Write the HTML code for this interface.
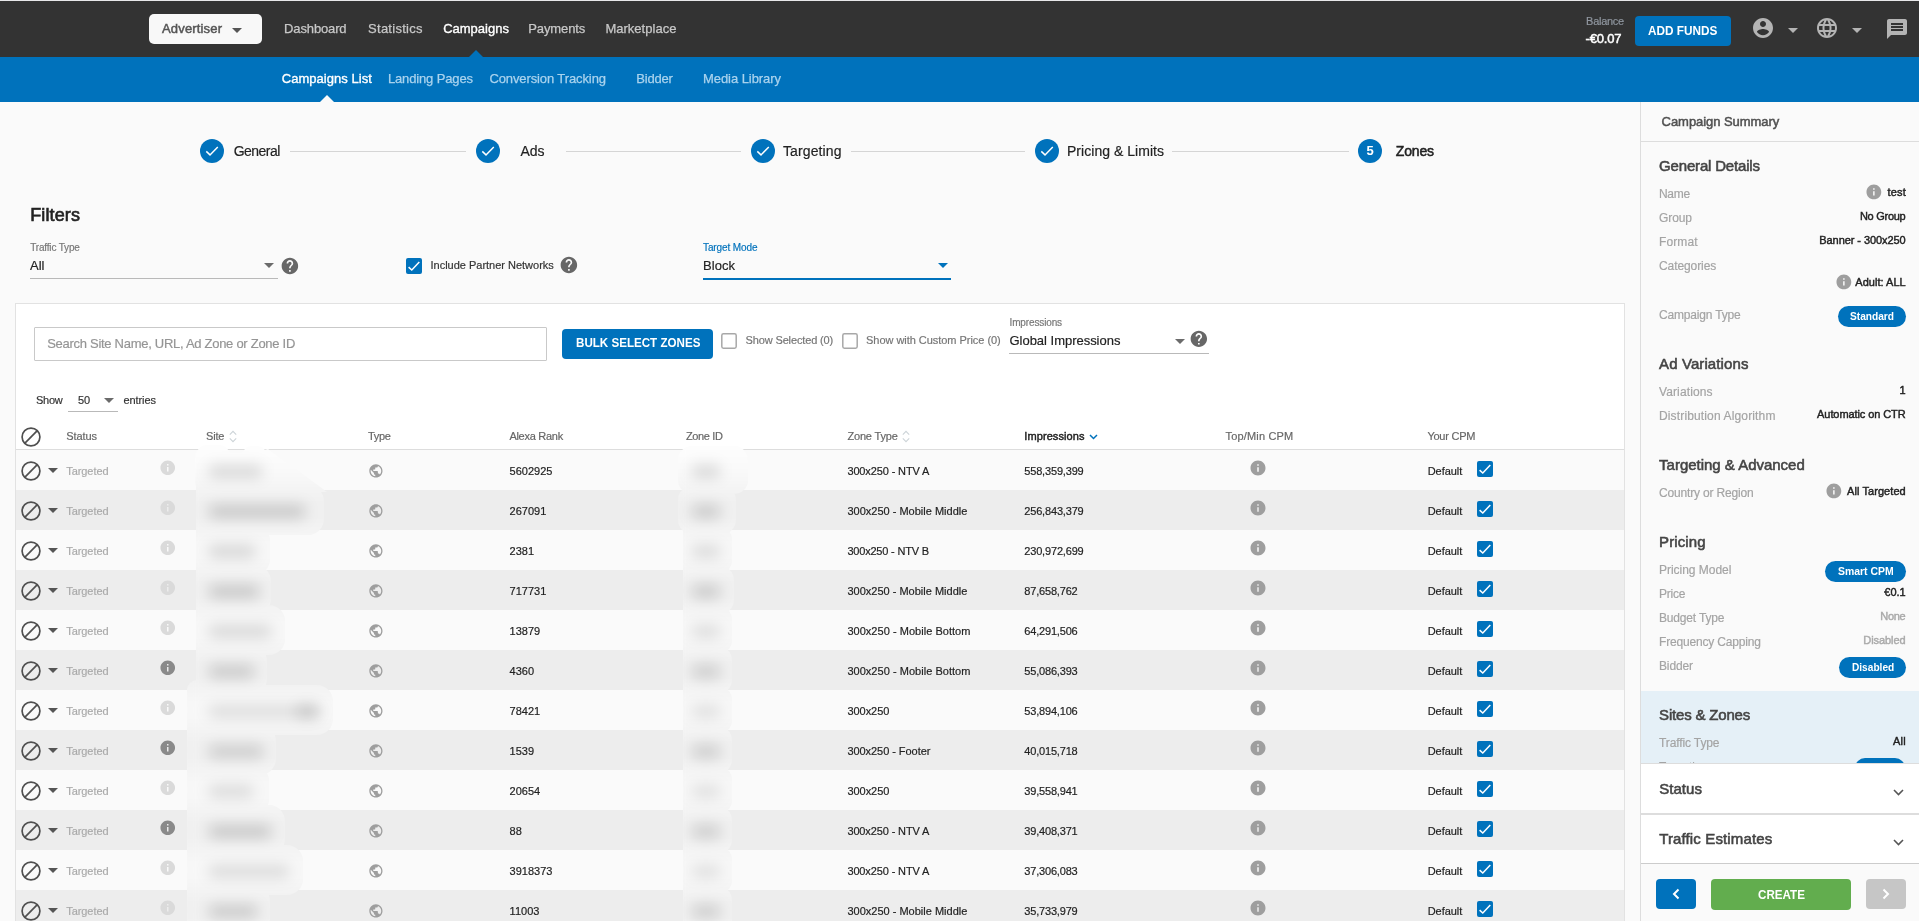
<!DOCTYPE html>
<html><head><meta charset="utf-8"><title>Campaigns</title>
<style>
html,body{margin:0;padding:0}
body{width:1919px;height:921px;overflow:hidden;position:relative;background:#fafafa;font-family:'Liberation Sans',sans-serif}
#r{position:absolute;left:0;top:0;width:1919px;height:921px;overflow:hidden;will-change:transform}
#r div,#r svg,#r span{position:absolute;display:block;box-sizing:border-box}
#r span{white-space:pre}
</style></head><body><div id="r" style="position:absolute">
<div style="left:0px;top:0px;width:1919px;height:57px;background:#333;"></div>
<div style="left:0px;top:0px;width:1919px;height:1px;background:#e8e8ea;"></div>
<div style="left:0px;top:57px;width:1919px;height:45px;background:#0072bc;"></div>
<div style="left:149px;top:14px;width:113px;height:30px;background:#f8f8f8;border-radius:5px;"></div>
<svg style="left:232.0px;top:28.0px;" width="10" height="5" viewBox="0 0 10 5"><path fill="#555" d="M0 0h10l-5.0 5z"/></svg>
<svg style="left:469px;top:50px;" width="14" height="7" viewBox="0 0 14 7"><path fill="#0072bc" d="M0 7L7 0l7 7z"/></svg>
<svg style="left:320px;top:95px;" width="14" height="7" viewBox="0 0 14 7"><path fill="#fafafa" d="M0 7L7 0l7 7z"/></svg>
<div style="left:1635px;top:16px;width:96px;height:30px;background:#0072bc;border-radius:4px;"></div>
<svg style="left:1751.0px;top:16.0px;" width="24.0" height="24.0" viewBox="0 0 24 24"><path fill="#b4b4b4" d="M12 2C6.48 2 2 6.48 2 12s4.48 10 10 10 10-4.48 10-10S17.52 2 12 2zm0 3c1.66 0 3 1.34 3 3s-1.34 3-3 3-3-1.34-3-3 1.34-3 3-3zm0 14.2c-2.5 0-4.71-1.28-6-3.22.03-1.99 4-3.08 6-3.08 1.99 0 5.97 1.09 6 3.08-1.29 1.94-3.5 3.22-6 3.22z"/></svg>
<svg style="left:1787.7px;top:27.5px;" width="10" height="5" viewBox="0 0 10 5"><path fill="#b4b4b4" d="M0 0h10l-5.0 5z"/></svg>
<svg style="left:1815.0px;top:16.0px;" width="24.0" height="24.0" viewBox="0 0 24 24"><path fill="#b4b4b4" d="M11.99 2C6.47 2 2 6.48 2 12s4.47 10 9.99 10C17.52 22 22 17.52 22 12S17.52 2 11.99 2zm6.93 6h-2.95c-.32-1.25-.78-2.45-1.38-3.56 1.84.63 3.37 1.91 4.33 3.56zM12 4.04c.83 1.2 1.48 2.53 1.91 3.96h-3.82c.43-1.43 1.08-2.76 1.91-3.96zM4.26 14C4.1 13.36 4 12.69 4 12s.1-1.36.26-2h3.38c-.08.66-.14 1.32-.14 2 0 .68.06 1.34.14 2H4.26zm.82 2h2.95c.32 1.25.78 2.45 1.38 3.56-1.84-.63-3.37-1.9-4.33-3.56zm2.95-8H5.08c.96-1.66 2.49-2.93 4.33-3.56C8.81 5.55 8.35 6.75 8.03 8zM12 19.96c-.83-1.2-1.48-2.53-1.91-3.96h3.82c-.43 1.43-1.08 2.76-1.91 3.96zM14.34 14H9.66c-.09-.66-.16-1.32-.16-2 0-.68.07-1.35.16-2h4.68c.09.65.16 1.32.16 2 0 .68-.07 1.34-.16 2zm.25 5.56c.6-1.11 1.06-2.31 1.38-3.56h2.95c-.96 1.65-2.49 2.93-4.33 3.56zM16.36 14c.08-.66.14-1.32.14-2 0-.68-.06-1.34-.14-2h3.38c.16.64.26 1.31.26 2s-.1 1.36-.26 2h-3.38z"/></svg>
<svg style="left:1852.0px;top:27.5px;" width="10" height="5" viewBox="0 0 10 5"><path fill="#b4b4b4" d="M0 0h10l-5.0 5z"/></svg>
<svg style="left:1885.0px;top:17.0px;" width="24.0" height="24.0" viewBox="0 0 24 24"><path fill="#b4b4b4" d="M20 2H4c-1.1 0-1.99.9-1.99 2L2 22l4-4h14c1.1 0 2-.9 2-2V4c0-1.1-.9-2-2-2zm-2 12H6v-2h12v2zm0-3H6V9h12v2zm0-3H6V6h12v2z"/></svg>
<div style="left:200px;top:139px;width:24px;height:24px;background:#0072bc;border-radius:50%;"></div>
<svg style="left:200px;top:139px;" width="24" height="24" viewBox="0 0 24 24"><path fill="none" stroke="#fff" stroke-width="1.45" d="M6.3 12.4L10 15.9L17.8 7.9"/></svg>
<div style="left:476px;top:139px;width:24px;height:24px;background:#0072bc;border-radius:50%;"></div>
<svg style="left:476px;top:139px;" width="24" height="24" viewBox="0 0 24 24"><path fill="none" stroke="#fff" stroke-width="1.45" d="M6.3 12.4L10 15.9L17.8 7.9"/></svg>
<div style="left:751px;top:139px;width:24px;height:24px;background:#0072bc;border-radius:50%;"></div>
<svg style="left:751px;top:139px;" width="24" height="24" viewBox="0 0 24 24"><path fill="none" stroke="#fff" stroke-width="1.45" d="M6.3 12.4L10 15.9L17.8 7.9"/></svg>
<div style="left:1035px;top:139px;width:24px;height:24px;background:#0072bc;border-radius:50%;"></div>
<svg style="left:1035px;top:139px;" width="24" height="24" viewBox="0 0 24 24"><path fill="none" stroke="#fff" stroke-width="1.45" d="M6.3 12.4L10 15.9L17.8 7.9"/></svg>
<div style="left:1358px;top:139px;width:24px;height:24px;background:#0072bc;border-radius:50%;"></div>
<div style="left:290px;top:151px;width:176px;height:1px;background:#d5d5d5;"></div>
<div style="left:566px;top:151px;width:175px;height:1px;background:#d5d5d5;"></div>
<div style="left:851px;top:151px;width:174px;height:1px;background:#d5d5d5;"></div>
<div style="left:1172px;top:151px;width:177px;height:1px;background:#d5d5d5;"></div>
<div style="left:30px;top:278px;width:248px;height:1px;background:#b9b9b9;"></div>
<svg style="left:264.0px;top:262.8px;" width="10" height="5" viewBox="0 0 10 5"><path fill="#6b6b6b" d="M0 0h10l-5.0 5z"/></svg>
<svg style="left:280.25px;top:256.1px;" width="19.8" height="19.8" viewBox="0 0 24 24"><path fill="#676767" d="M12 2C6.48 2 2 6.48 2 12s4.48 10 10 10 10-4.48 10-10S17.52 2 12 2zm1 17h-2v-2h2v2zm2.07-7.75l-.9.92C13.45 12.9 13 13.5 13 15h-2v-.5c0-1.1.45-2.1 1.17-2.83l1.24-1.26c.37-.36.59-.86.59-1.41 0-1.1-.9-2-2-2s-2 .9-2 2H8c0-2.21 1.79-4 4-4s4 1.79 4 4c0 .88-.36 1.68-.93 2.25z"/></svg>
<div style="left:406px;top:258px;width:16px;height:16px;background:#0072bc;border-radius:2px;"></div>
<svg style="left:406px;top:258px;" width="16" height="16" viewBox="0 0 16 16"><path fill="none" stroke="#fff" stroke-width="1.5" d="M2.6 9.1L5.8 12L13.3 4"/></svg>
<svg style="left:559.1px;top:255.1px;" width="19.8" height="19.8" viewBox="0 0 24 24"><path fill="#676767" d="M12 2C6.48 2 2 6.48 2 12s4.48 10 10 10 10-4.48 10-10S17.52 2 12 2zm1 17h-2v-2h2v2zm2.07-7.75l-.9.92C13.45 12.9 13 13.5 13 15h-2v-.5c0-1.1.45-2.1 1.17-2.83l1.24-1.26c.37-.36.59-.86.59-1.41 0-1.1-.9-2-2-2s-2 .9-2 2H8c0-2.21 1.79-4 4-4s4 1.79 4 4c0 .88-.36 1.68-.93 2.25z"/></svg>
<div style="left:703px;top:278px;width:248px;height:2px;background:#0072bc;"></div>
<svg style="left:938.0px;top:263.1px;" width="10" height="5" viewBox="0 0 10 5"><path fill="#0072bc" d="M0 0h10l-5.0 5z"/></svg>
<div style="left:15px;top:303px;width:1610px;height:640px;background:#fff;border:1px solid #e2e2e2;"></div>
<div style="left:34px;top:327px;width:513px;height:34px;background:#fff;border:1px solid #c9c9c9;border-radius:1px;"></div>
<div style="left:562px;top:329px;width:151px;height:30px;background:#0072bc;border-radius:4px;"></div>
<svg style="left:721px;top:333px;" width="16" height="16" viewBox="0 0 16 16"><rect x="0.8" y="0.8" width="14.4" height="14.4" rx="1.6" fill="#fff" stroke="#a8a8a8" stroke-width="1.5"/></svg>
<svg style="left:842px;top:333px;" width="16" height="16" viewBox="0 0 16 16"><rect x="0.8" y="0.8" width="14.4" height="14.4" rx="1.6" fill="#fff" stroke="#a8a8a8" stroke-width="1.5"/></svg>
<svg style="left:1174.8px;top:339.0px;" width="10" height="5" viewBox="0 0 10 5"><path fill="#6b6b6b" d="M0 0h10l-5.0 5z"/></svg>
<svg style="left:1189.16px;top:329.36px;" width="19.68" height="19.68" viewBox="0 0 24 24"><path fill="#676767" d="M12 2C6.48 2 2 6.48 2 12s4.48 10 10 10 10-4.48 10-10S17.52 2 12 2zm1 17h-2v-2h2v2zm2.07-7.75l-.9.92C13.45 12.9 13 13.5 13 15h-2v-.5c0-1.1.45-2.1 1.17-2.83l1.24-1.26c.37-.36.59-.86.59-1.41 0-1.1-.9-2-2-2s-2 .9-2 2H8c0-2.21 1.79-4 4-4s4 1.79 4 4c0 .88-.36 1.68-.93 2.25z"/></svg>
<div style="left:1009px;top:353px;width:200px;height:1px;background:#b9b9b9;"></div>
<svg style="left:104.1px;top:397.9px;" width="10" height="5" viewBox="0 0 10 5"><path fill="#6b6b6b" d="M0 0h10l-5.0 5z"/></svg>
<div style="left:68px;top:411px;width:50px;height:1px;background:#b9b9b9;"></div>
<svg style="left:20px;top:425.9px;" width="22" height="22" viewBox="0 0 22 22"><g fill="none" stroke="#4f4f4f" stroke-width="1.7"><circle cx="11" cy="11" r="8.9"/><path d="M4.7 17.3L17.3 4.7"/></g></svg>
<svg style="left:229px;top:429.8px;" width="8" height="13" viewBox="0 0 8 13"><path fill="none" stroke="#cdd4d8" stroke-width="1.1" d="M0.8 4.6L4 1.3L7.2 4.6M0.8 8.4L4 11.7L7.2 8.4"/></svg>
<svg style="left:902px;top:429.8px;" width="8" height="13" viewBox="0 0 8 13"><path fill="none" stroke="#cdd4d8" stroke-width="1.1" d="M0.8 4.6L4 1.3L7.2 4.6M0.8 8.4L4 11.7L7.2 8.4"/></svg>
<svg style="left:1089px;top:433.5px;" width="9" height="6" viewBox="0 0 9 6"><path fill="none" stroke="#0072bc" stroke-width="1.5" d="M1 1l3.5 3.5L8 1"/></svg>
<div style="left:16px;top:449px;width:1608px;height:1px;background:#ddd;"></div>
<div style="left:16px;top:450px;width:1608px;height:40px;background:#fafafa;"></div>
<svg style="left:20px;top:460px;" width="22" height="22" viewBox="0 0 22 22"><g fill="none" stroke="#4f4f4f" stroke-width="1.7"><circle cx="11" cy="11" r="8.9"/><path d="M4.7 17.3L17.3 4.7"/></g></svg>
<svg style="left:48.0px;top:468.0px;" width="10" height="5" viewBox="0 0 10 5"><path fill="#555" d="M0 0h10l-5.0 5z"/></svg>
<svg style="left:159.24px;top:459.34px;" width="17.52" height="17.52" viewBox="0 0 24 24"><path fill="#dadada" d="M12 2C6.48 2 2 6.48 2 12s4.48 10 10 10 10-4.48 10-10S17.52 2 12 2zm1 15h-2v-6h2v6zm0-8h-2V7h2v2z"/></svg>
<svg style="left:367.68px;top:462.98px;" width="15.84" height="15.84" viewBox="0 0 24 24"><path fill="#9e9e9e" d="M12 2C6.48 2 2 6.48 2 12s4.48 10 10 10 10-4.48 10-10S17.52 2 12 2zm-1 17.93c-3.95-.49-7-3.85-7-7.93 0-.62.08-1.21.21-1.79L9 15v1c0 1.1.9 2 2 2v1.93zm6.9-2.54c-.26-.81-1-1.39-1.9-1.39h-1v-3c0-.55-.45-1-1-1H8v-2h2c.55 0 1-.45 1-1V7h2c1.1 0 2-.9 2-2v-.41c2.93 1.19 5 4.06 5 7.41 0 2.08-.8 3.97-2.1 5.39z"/></svg>
<svg style="left:1248.75px;top:459.0px;" width="18.0" height="18.0" viewBox="0 0 24 24"><path fill="#9e9e9e" d="M12 2C6.48 2 2 6.48 2 12s4.48 10 10 10 10-4.48 10-10S17.52 2 12 2zm1 15h-2v-6h2v6zm0-8h-2V7h2v2z"/></svg>
<div style="left:1477px;top:461px;width:16px;height:16px;background:#0072bc;border-radius:2px;"></div>
<svg style="left:1477px;top:461px;" width="16" height="16" viewBox="0 0 16 16"><path fill="none" stroke="#fff" stroke-width="1.5" d="M2.6 9.1L5.8 12L13.3 4"/></svg>
<div style="left:16px;top:490px;width:1608px;height:40px;background:#ededed;"></div>
<svg style="left:20px;top:500px;" width="22" height="22" viewBox="0 0 22 22"><g fill="none" stroke="#4f4f4f" stroke-width="1.7"><circle cx="11" cy="11" r="8.9"/><path d="M4.7 17.3L17.3 4.7"/></g></svg>
<svg style="left:48.0px;top:508.0px;" width="10" height="5" viewBox="0 0 10 5"><path fill="#555" d="M0 0h10l-5.0 5z"/></svg>
<svg style="left:159.24px;top:499.34px;" width="17.52" height="17.52" viewBox="0 0 24 24"><path fill="#dadada" d="M12 2C6.48 2 2 6.48 2 12s4.48 10 10 10 10-4.48 10-10S17.52 2 12 2zm1 15h-2v-6h2v6zm0-8h-2V7h2v2z"/></svg>
<svg style="left:367.68px;top:502.98px;" width="15.84" height="15.84" viewBox="0 0 24 24"><path fill="#9e9e9e" d="M12 2C6.48 2 2 6.48 2 12s4.48 10 10 10 10-4.48 10-10S17.52 2 12 2zm-1 17.93c-3.95-.49-7-3.85-7-7.93 0-.62.08-1.21.21-1.79L9 15v1c0 1.1.9 2 2 2v1.93zm6.9-2.54c-.26-.81-1-1.39-1.9-1.39h-1v-3c0-.55-.45-1-1-1H8v-2h2c.55 0 1-.45 1-1V7h2c1.1 0 2-.9 2-2v-.41c2.93 1.19 5 4.06 5 7.41 0 2.08-.8 3.97-2.1 5.39z"/></svg>
<svg style="left:1248.75px;top:499.0px;" width="18.0" height="18.0" viewBox="0 0 24 24"><path fill="#9e9e9e" d="M12 2C6.48 2 2 6.48 2 12s4.48 10 10 10 10-4.48 10-10S17.52 2 12 2zm1 15h-2v-6h2v6zm0-8h-2V7h2v2z"/></svg>
<div style="left:1477px;top:501px;width:16px;height:16px;background:#0072bc;border-radius:2px;"></div>
<svg style="left:1477px;top:501px;" width="16" height="16" viewBox="0 0 16 16"><path fill="none" stroke="#fff" stroke-width="1.5" d="M2.6 9.1L5.8 12L13.3 4"/></svg>
<div style="left:16px;top:530px;width:1608px;height:40px;background:#fafafa;"></div>
<svg style="left:20px;top:540px;" width="22" height="22" viewBox="0 0 22 22"><g fill="none" stroke="#4f4f4f" stroke-width="1.7"><circle cx="11" cy="11" r="8.9"/><path d="M4.7 17.3L17.3 4.7"/></g></svg>
<svg style="left:48.0px;top:548.0px;" width="10" height="5" viewBox="0 0 10 5"><path fill="#555" d="M0 0h10l-5.0 5z"/></svg>
<svg style="left:159.24px;top:539.34px;" width="17.52" height="17.52" viewBox="0 0 24 24"><path fill="#dadada" d="M12 2C6.48 2 2 6.48 2 12s4.48 10 10 10 10-4.48 10-10S17.52 2 12 2zm1 15h-2v-6h2v6zm0-8h-2V7h2v2z"/></svg>
<svg style="left:367.68px;top:542.98px;" width="15.84" height="15.84" viewBox="0 0 24 24"><path fill="#9e9e9e" d="M12 2C6.48 2 2 6.48 2 12s4.48 10 10 10 10-4.48 10-10S17.52 2 12 2zm-1 17.93c-3.95-.49-7-3.85-7-7.93 0-.62.08-1.21.21-1.79L9 15v1c0 1.1.9 2 2 2v1.93zm6.9-2.54c-.26-.81-1-1.39-1.9-1.39h-1v-3c0-.55-.45-1-1-1H8v-2h2c.55 0 1-.45 1-1V7h2c1.1 0 2-.9 2-2v-.41c2.93 1.19 5 4.06 5 7.41 0 2.08-.8 3.97-2.1 5.39z"/></svg>
<svg style="left:1248.75px;top:539.0px;" width="18.0" height="18.0" viewBox="0 0 24 24"><path fill="#9e9e9e" d="M12 2C6.48 2 2 6.48 2 12s4.48 10 10 10 10-4.48 10-10S17.52 2 12 2zm1 15h-2v-6h2v6zm0-8h-2V7h2v2z"/></svg>
<div style="left:1477px;top:541px;width:16px;height:16px;background:#0072bc;border-radius:2px;"></div>
<svg style="left:1477px;top:541px;" width="16" height="16" viewBox="0 0 16 16"><path fill="none" stroke="#fff" stroke-width="1.5" d="M2.6 9.1L5.8 12L13.3 4"/></svg>
<div style="left:16px;top:570px;width:1608px;height:40px;background:#ededed;"></div>
<svg style="left:20px;top:580px;" width="22" height="22" viewBox="0 0 22 22"><g fill="none" stroke="#4f4f4f" stroke-width="1.7"><circle cx="11" cy="11" r="8.9"/><path d="M4.7 17.3L17.3 4.7"/></g></svg>
<svg style="left:48.0px;top:588.0px;" width="10" height="5" viewBox="0 0 10 5"><path fill="#555" d="M0 0h10l-5.0 5z"/></svg>
<svg style="left:159.24px;top:579.34px;" width="17.52" height="17.52" viewBox="0 0 24 24"><path fill="#dadada" d="M12 2C6.48 2 2 6.48 2 12s4.48 10 10 10 10-4.48 10-10S17.52 2 12 2zm1 15h-2v-6h2v6zm0-8h-2V7h2v2z"/></svg>
<svg style="left:367.68px;top:582.98px;" width="15.84" height="15.84" viewBox="0 0 24 24"><path fill="#9e9e9e" d="M12 2C6.48 2 2 6.48 2 12s4.48 10 10 10 10-4.48 10-10S17.52 2 12 2zm-1 17.93c-3.95-.49-7-3.85-7-7.93 0-.62.08-1.21.21-1.79L9 15v1c0 1.1.9 2 2 2v1.93zm6.9-2.54c-.26-.81-1-1.39-1.9-1.39h-1v-3c0-.55-.45-1-1-1H8v-2h2c.55 0 1-.45 1-1V7h2c1.1 0 2-.9 2-2v-.41c2.93 1.19 5 4.06 5 7.41 0 2.08-.8 3.97-2.1 5.39z"/></svg>
<svg style="left:1248.75px;top:579.0px;" width="18.0" height="18.0" viewBox="0 0 24 24"><path fill="#9e9e9e" d="M12 2C6.48 2 2 6.48 2 12s4.48 10 10 10 10-4.48 10-10S17.52 2 12 2zm1 15h-2v-6h2v6zm0-8h-2V7h2v2z"/></svg>
<div style="left:1477px;top:581px;width:16px;height:16px;background:#0072bc;border-radius:2px;"></div>
<svg style="left:1477px;top:581px;" width="16" height="16" viewBox="0 0 16 16"><path fill="none" stroke="#fff" stroke-width="1.5" d="M2.6 9.1L5.8 12L13.3 4"/></svg>
<div style="left:16px;top:610px;width:1608px;height:40px;background:#fafafa;"></div>
<svg style="left:20px;top:620px;" width="22" height="22" viewBox="0 0 22 22"><g fill="none" stroke="#4f4f4f" stroke-width="1.7"><circle cx="11" cy="11" r="8.9"/><path d="M4.7 17.3L17.3 4.7"/></g></svg>
<svg style="left:48.0px;top:628.0px;" width="10" height="5" viewBox="0 0 10 5"><path fill="#555" d="M0 0h10l-5.0 5z"/></svg>
<svg style="left:159.24px;top:619.34px;" width="17.52" height="17.52" viewBox="0 0 24 24"><path fill="#dadada" d="M12 2C6.48 2 2 6.48 2 12s4.48 10 10 10 10-4.48 10-10S17.52 2 12 2zm1 15h-2v-6h2v6zm0-8h-2V7h2v2z"/></svg>
<svg style="left:367.68px;top:622.98px;" width="15.84" height="15.84" viewBox="0 0 24 24"><path fill="#9e9e9e" d="M12 2C6.48 2 2 6.48 2 12s4.48 10 10 10 10-4.48 10-10S17.52 2 12 2zm-1 17.93c-3.95-.49-7-3.85-7-7.93 0-.62.08-1.21.21-1.79L9 15v1c0 1.1.9 2 2 2v1.93zm6.9-2.54c-.26-.81-1-1.39-1.9-1.39h-1v-3c0-.55-.45-1-1-1H8v-2h2c.55 0 1-.45 1-1V7h2c1.1 0 2-.9 2-2v-.41c2.93 1.19 5 4.06 5 7.41 0 2.08-.8 3.97-2.1 5.39z"/></svg>
<svg style="left:1248.75px;top:619.0px;" width="18.0" height="18.0" viewBox="0 0 24 24"><path fill="#9e9e9e" d="M12 2C6.48 2 2 6.48 2 12s4.48 10 10 10 10-4.48 10-10S17.52 2 12 2zm1 15h-2v-6h2v6zm0-8h-2V7h2v2z"/></svg>
<div style="left:1477px;top:621px;width:16px;height:16px;background:#0072bc;border-radius:2px;"></div>
<svg style="left:1477px;top:621px;" width="16" height="16" viewBox="0 0 16 16"><path fill="none" stroke="#fff" stroke-width="1.5" d="M2.6 9.1L5.8 12L13.3 4"/></svg>
<div style="left:16px;top:650px;width:1608px;height:40px;background:#ededed;"></div>
<svg style="left:20px;top:660px;" width="22" height="22" viewBox="0 0 22 22"><g fill="none" stroke="#4f4f4f" stroke-width="1.7"><circle cx="11" cy="11" r="8.9"/><path d="M4.7 17.3L17.3 4.7"/></g></svg>
<svg style="left:48.0px;top:668.0px;" width="10" height="5" viewBox="0 0 10 5"><path fill="#555" d="M0 0h10l-5.0 5z"/></svg>
<svg style="left:159.24px;top:659.34px;" width="17.52" height="17.52" viewBox="0 0 24 24"><path fill="#8a8a8a" d="M12 2C6.48 2 2 6.48 2 12s4.48 10 10 10 10-4.48 10-10S17.52 2 12 2zm1 15h-2v-6h2v6zm0-8h-2V7h2v2z"/></svg>
<svg style="left:367.68px;top:662.98px;" width="15.84" height="15.84" viewBox="0 0 24 24"><path fill="#9e9e9e" d="M12 2C6.48 2 2 6.48 2 12s4.48 10 10 10 10-4.48 10-10S17.52 2 12 2zm-1 17.93c-3.95-.49-7-3.85-7-7.93 0-.62.08-1.21.21-1.79L9 15v1c0 1.1.9 2 2 2v1.93zm6.9-2.54c-.26-.81-1-1.39-1.9-1.39h-1v-3c0-.55-.45-1-1-1H8v-2h2c.55 0 1-.45 1-1V7h2c1.1 0 2-.9 2-2v-.41c2.93 1.19 5 4.06 5 7.41 0 2.08-.8 3.97-2.1 5.39z"/></svg>
<svg style="left:1248.75px;top:659.0px;" width="18.0" height="18.0" viewBox="0 0 24 24"><path fill="#9e9e9e" d="M12 2C6.48 2 2 6.48 2 12s4.48 10 10 10 10-4.48 10-10S17.52 2 12 2zm1 15h-2v-6h2v6zm0-8h-2V7h2v2z"/></svg>
<div style="left:1477px;top:661px;width:16px;height:16px;background:#0072bc;border-radius:2px;"></div>
<svg style="left:1477px;top:661px;" width="16" height="16" viewBox="0 0 16 16"><path fill="none" stroke="#fff" stroke-width="1.5" d="M2.6 9.1L5.8 12L13.3 4"/></svg>
<div style="left:16px;top:690px;width:1608px;height:40px;background:#fafafa;"></div>
<svg style="left:20px;top:700px;" width="22" height="22" viewBox="0 0 22 22"><g fill="none" stroke="#4f4f4f" stroke-width="1.7"><circle cx="11" cy="11" r="8.9"/><path d="M4.7 17.3L17.3 4.7"/></g></svg>
<svg style="left:48.0px;top:708.0px;" width="10" height="5" viewBox="0 0 10 5"><path fill="#555" d="M0 0h10l-5.0 5z"/></svg>
<svg style="left:159.24px;top:699.34px;" width="17.52" height="17.52" viewBox="0 0 24 24"><path fill="#dadada" d="M12 2C6.48 2 2 6.48 2 12s4.48 10 10 10 10-4.48 10-10S17.52 2 12 2zm1 15h-2v-6h2v6zm0-8h-2V7h2v2z"/></svg>
<svg style="left:367.68px;top:702.98px;" width="15.84" height="15.84" viewBox="0 0 24 24"><path fill="#9e9e9e" d="M12 2C6.48 2 2 6.48 2 12s4.48 10 10 10 10-4.48 10-10S17.52 2 12 2zm-1 17.93c-3.95-.49-7-3.85-7-7.93 0-.62.08-1.21.21-1.79L9 15v1c0 1.1.9 2 2 2v1.93zm6.9-2.54c-.26-.81-1-1.39-1.9-1.39h-1v-3c0-.55-.45-1-1-1H8v-2h2c.55 0 1-.45 1-1V7h2c1.1 0 2-.9 2-2v-.41c2.93 1.19 5 4.06 5 7.41 0 2.08-.8 3.97-2.1 5.39z"/></svg>
<svg style="left:1248.75px;top:699.0px;" width="18.0" height="18.0" viewBox="0 0 24 24"><path fill="#9e9e9e" d="M12 2C6.48 2 2 6.48 2 12s4.48 10 10 10 10-4.48 10-10S17.52 2 12 2zm1 15h-2v-6h2v6zm0-8h-2V7h2v2z"/></svg>
<div style="left:1477px;top:701px;width:16px;height:16px;background:#0072bc;border-radius:2px;"></div>
<svg style="left:1477px;top:701px;" width="16" height="16" viewBox="0 0 16 16"><path fill="none" stroke="#fff" stroke-width="1.5" d="M2.6 9.1L5.8 12L13.3 4"/></svg>
<div style="left:16px;top:730px;width:1608px;height:40px;background:#ededed;"></div>
<svg style="left:20px;top:740px;" width="22" height="22" viewBox="0 0 22 22"><g fill="none" stroke="#4f4f4f" stroke-width="1.7"><circle cx="11" cy="11" r="8.9"/><path d="M4.7 17.3L17.3 4.7"/></g></svg>
<svg style="left:48.0px;top:748.0px;" width="10" height="5" viewBox="0 0 10 5"><path fill="#555" d="M0 0h10l-5.0 5z"/></svg>
<svg style="left:159.24px;top:739.34px;" width="17.52" height="17.52" viewBox="0 0 24 24"><path fill="#8a8a8a" d="M12 2C6.48 2 2 6.48 2 12s4.48 10 10 10 10-4.48 10-10S17.52 2 12 2zm1 15h-2v-6h2v6zm0-8h-2V7h2v2z"/></svg>
<svg style="left:367.68px;top:742.98px;" width="15.84" height="15.84" viewBox="0 0 24 24"><path fill="#9e9e9e" d="M12 2C6.48 2 2 6.48 2 12s4.48 10 10 10 10-4.48 10-10S17.52 2 12 2zm-1 17.93c-3.95-.49-7-3.85-7-7.93 0-.62.08-1.21.21-1.79L9 15v1c0 1.1.9 2 2 2v1.93zm6.9-2.54c-.26-.81-1-1.39-1.9-1.39h-1v-3c0-.55-.45-1-1-1H8v-2h2c.55 0 1-.45 1-1V7h2c1.1 0 2-.9 2-2v-.41c2.93 1.19 5 4.06 5 7.41 0 2.08-.8 3.97-2.1 5.39z"/></svg>
<svg style="left:1248.75px;top:739.0px;" width="18.0" height="18.0" viewBox="0 0 24 24"><path fill="#9e9e9e" d="M12 2C6.48 2 2 6.48 2 12s4.48 10 10 10 10-4.48 10-10S17.52 2 12 2zm1 15h-2v-6h2v6zm0-8h-2V7h2v2z"/></svg>
<div style="left:1477px;top:741px;width:16px;height:16px;background:#0072bc;border-radius:2px;"></div>
<svg style="left:1477px;top:741px;" width="16" height="16" viewBox="0 0 16 16"><path fill="none" stroke="#fff" stroke-width="1.5" d="M2.6 9.1L5.8 12L13.3 4"/></svg>
<div style="left:16px;top:770px;width:1608px;height:40px;background:#fafafa;"></div>
<svg style="left:20px;top:780px;" width="22" height="22" viewBox="0 0 22 22"><g fill="none" stroke="#4f4f4f" stroke-width="1.7"><circle cx="11" cy="11" r="8.9"/><path d="M4.7 17.3L17.3 4.7"/></g></svg>
<svg style="left:48.0px;top:788.0px;" width="10" height="5" viewBox="0 0 10 5"><path fill="#555" d="M0 0h10l-5.0 5z"/></svg>
<svg style="left:159.24px;top:779.34px;" width="17.52" height="17.52" viewBox="0 0 24 24"><path fill="#dadada" d="M12 2C6.48 2 2 6.48 2 12s4.48 10 10 10 10-4.48 10-10S17.52 2 12 2zm1 15h-2v-6h2v6zm0-8h-2V7h2v2z"/></svg>
<svg style="left:367.68px;top:782.98px;" width="15.84" height="15.84" viewBox="0 0 24 24"><path fill="#9e9e9e" d="M12 2C6.48 2 2 6.48 2 12s4.48 10 10 10 10-4.48 10-10S17.52 2 12 2zm-1 17.93c-3.95-.49-7-3.85-7-7.93 0-.62.08-1.21.21-1.79L9 15v1c0 1.1.9 2 2 2v1.93zm6.9-2.54c-.26-.81-1-1.39-1.9-1.39h-1v-3c0-.55-.45-1-1-1H8v-2h2c.55 0 1-.45 1-1V7h2c1.1 0 2-.9 2-2v-.41c2.93 1.19 5 4.06 5 7.41 0 2.08-.8 3.97-2.1 5.39z"/></svg>
<svg style="left:1248.75px;top:779.0px;" width="18.0" height="18.0" viewBox="0 0 24 24"><path fill="#9e9e9e" d="M12 2C6.48 2 2 6.48 2 12s4.48 10 10 10 10-4.48 10-10S17.52 2 12 2zm1 15h-2v-6h2v6zm0-8h-2V7h2v2z"/></svg>
<div style="left:1477px;top:781px;width:16px;height:16px;background:#0072bc;border-radius:2px;"></div>
<svg style="left:1477px;top:781px;" width="16" height="16" viewBox="0 0 16 16"><path fill="none" stroke="#fff" stroke-width="1.5" d="M2.6 9.1L5.8 12L13.3 4"/></svg>
<div style="left:16px;top:810px;width:1608px;height:40px;background:#ededed;"></div>
<svg style="left:20px;top:820px;" width="22" height="22" viewBox="0 0 22 22"><g fill="none" stroke="#4f4f4f" stroke-width="1.7"><circle cx="11" cy="11" r="8.9"/><path d="M4.7 17.3L17.3 4.7"/></g></svg>
<svg style="left:48.0px;top:828.0px;" width="10" height="5" viewBox="0 0 10 5"><path fill="#555" d="M0 0h10l-5.0 5z"/></svg>
<svg style="left:159.24px;top:819.34px;" width="17.52" height="17.52" viewBox="0 0 24 24"><path fill="#8a8a8a" d="M12 2C6.48 2 2 6.48 2 12s4.48 10 10 10 10-4.48 10-10S17.52 2 12 2zm1 15h-2v-6h2v6zm0-8h-2V7h2v2z"/></svg>
<svg style="left:367.68px;top:822.98px;" width="15.84" height="15.84" viewBox="0 0 24 24"><path fill="#9e9e9e" d="M12 2C6.48 2 2 6.48 2 12s4.48 10 10 10 10-4.48 10-10S17.52 2 12 2zm-1 17.93c-3.95-.49-7-3.85-7-7.93 0-.62.08-1.21.21-1.79L9 15v1c0 1.1.9 2 2 2v1.93zm6.9-2.54c-.26-.81-1-1.39-1.9-1.39h-1v-3c0-.55-.45-1-1-1H8v-2h2c.55 0 1-.45 1-1V7h2c1.1 0 2-.9 2-2v-.41c2.93 1.19 5 4.06 5 7.41 0 2.08-.8 3.97-2.1 5.39z"/></svg>
<svg style="left:1248.75px;top:819.0px;" width="18.0" height="18.0" viewBox="0 0 24 24"><path fill="#9e9e9e" d="M12 2C6.48 2 2 6.48 2 12s4.48 10 10 10 10-4.48 10-10S17.52 2 12 2zm1 15h-2v-6h2v6zm0-8h-2V7h2v2z"/></svg>
<div style="left:1477px;top:821px;width:16px;height:16px;background:#0072bc;border-radius:2px;"></div>
<svg style="left:1477px;top:821px;" width="16" height="16" viewBox="0 0 16 16"><path fill="none" stroke="#fff" stroke-width="1.5" d="M2.6 9.1L5.8 12L13.3 4"/></svg>
<div style="left:16px;top:850px;width:1608px;height:40px;background:#fafafa;"></div>
<svg style="left:20px;top:860px;" width="22" height="22" viewBox="0 0 22 22"><g fill="none" stroke="#4f4f4f" stroke-width="1.7"><circle cx="11" cy="11" r="8.9"/><path d="M4.7 17.3L17.3 4.7"/></g></svg>
<svg style="left:48.0px;top:868.0px;" width="10" height="5" viewBox="0 0 10 5"><path fill="#555" d="M0 0h10l-5.0 5z"/></svg>
<svg style="left:159.24px;top:859.34px;" width="17.52" height="17.52" viewBox="0 0 24 24"><path fill="#dadada" d="M12 2C6.48 2 2 6.48 2 12s4.48 10 10 10 10-4.48 10-10S17.52 2 12 2zm1 15h-2v-6h2v6zm0-8h-2V7h2v2z"/></svg>
<svg style="left:367.68px;top:862.98px;" width="15.84" height="15.84" viewBox="0 0 24 24"><path fill="#9e9e9e" d="M12 2C6.48 2 2 6.48 2 12s4.48 10 10 10 10-4.48 10-10S17.52 2 12 2zm-1 17.93c-3.95-.49-7-3.85-7-7.93 0-.62.08-1.21.21-1.79L9 15v1c0 1.1.9 2 2 2v1.93zm6.9-2.54c-.26-.81-1-1.39-1.9-1.39h-1v-3c0-.55-.45-1-1-1H8v-2h2c.55 0 1-.45 1-1V7h2c1.1 0 2-.9 2-2v-.41c2.93 1.19 5 4.06 5 7.41 0 2.08-.8 3.97-2.1 5.39z"/></svg>
<svg style="left:1248.75px;top:859.0px;" width="18.0" height="18.0" viewBox="0 0 24 24"><path fill="#9e9e9e" d="M12 2C6.48 2 2 6.48 2 12s4.48 10 10 10 10-4.48 10-10S17.52 2 12 2zm1 15h-2v-6h2v6zm0-8h-2V7h2v2z"/></svg>
<div style="left:1477px;top:861px;width:16px;height:16px;background:#0072bc;border-radius:2px;"></div>
<svg style="left:1477px;top:861px;" width="16" height="16" viewBox="0 0 16 16"><path fill="none" stroke="#fff" stroke-width="1.5" d="M2.6 9.1L5.8 12L13.3 4"/></svg>
<div style="left:16px;top:890px;width:1608px;height:40px;background:#ededed;"></div>
<svg style="left:20px;top:900px;" width="22" height="22" viewBox="0 0 22 22"><g fill="none" stroke="#4f4f4f" stroke-width="1.7"><circle cx="11" cy="11" r="8.9"/><path d="M4.7 17.3L17.3 4.7"/></g></svg>
<svg style="left:48.0px;top:908.0px;" width="10" height="5" viewBox="0 0 10 5"><path fill="#555" d="M0 0h10l-5.0 5z"/></svg>
<svg style="left:159.24px;top:899.34px;" width="17.52" height="17.52" viewBox="0 0 24 24"><path fill="#dadada" d="M12 2C6.48 2 2 6.48 2 12s4.48 10 10 10 10-4.48 10-10S17.52 2 12 2zm1 15h-2v-6h2v6zm0-8h-2V7h2v2z"/></svg>
<svg style="left:367.68px;top:902.98px;" width="15.84" height="15.84" viewBox="0 0 24 24"><path fill="#9e9e9e" d="M12 2C6.48 2 2 6.48 2 12s4.48 10 10 10 10-4.48 10-10S17.52 2 12 2zm-1 17.93c-3.95-.49-7-3.85-7-7.93 0-.62.08-1.21.21-1.79L9 15v1c0 1.1.9 2 2 2v1.93zm6.9-2.54c-.26-.81-1-1.39-1.9-1.39h-1v-3c0-.55-.45-1-1-1H8v-2h2c.55 0 1-.45 1-1V7h2c1.1 0 2-.9 2-2v-.41c2.93 1.19 5 4.06 5 7.41 0 2.08-.8 3.97-2.1 5.39z"/></svg>
<svg style="left:1248.75px;top:899.0px;" width="18.0" height="18.0" viewBox="0 0 24 24"><path fill="#9e9e9e" d="M12 2C6.48 2 2 6.48 2 12s4.48 10 10 10 10-4.48 10-10S17.52 2 12 2zm1 15h-2v-6h2v6zm0-8h-2V7h2v2z"/></svg>
<div style="left:1477px;top:901px;width:16px;height:16px;background:#0072bc;border-radius:2px;"></div>
<svg style="left:1477px;top:901px;" width="16" height="16" viewBox="0 0 16 16"><path fill="none" stroke="#fff" stroke-width="1.5" d="M2.6 9.1L5.8 12L13.3 4"/></svg>
<div style="left:1640px;top:102px;width:279px;height:819px;background:#fafafa;border-left:1px solid #ddd;"></div>
<div style="left:1641px;top:141px;width:278px;height:1px;background:#ddd;"></div>
<svg style="left:1865.12px;top:183.12px;" width="17.76" height="17.76" viewBox="0 0 24 24"><path fill="#9e9e9e" d="M12 2C6.48 2 2 6.48 2 12s4.48 10 10 10 10-4.48 10-10S17.52 2 12 2zm1 15h-2v-6h2v6zm0-8h-2V7h2v2z"/></svg>
<svg style="left:1835.02px;top:273.12px;" width="17.76" height="17.76" viewBox="0 0 24 24"><path fill="#9e9e9e" d="M12 2C6.48 2 2 6.48 2 12s4.48 10 10 10 10-4.48 10-10S17.52 2 12 2zm1 15h-2v-6h2v6zm0-8h-2V7h2v2z"/></svg>
<div style="left:1838px;top:306px;width:68px;height:21px;background:#0072bc;border-radius:10.5px;"></div>
<svg style="left:1825.12px;top:482.12px;" width="17.76" height="17.76" viewBox="0 0 24 24"><path fill="#9e9e9e" d="M12 2C6.48 2 2 6.48 2 12s4.48 10 10 10 10-4.48 10-10S17.52 2 12 2zm1 15h-2v-6h2v6zm0-8h-2V7h2v2z"/></svg>
<div style="left:1825px;top:561px;width:81px;height:21px;background:#0072bc;border-radius:10.5px;"></div>
<div style="left:1839px;top:657px;width:67px;height:21px;background:#0072bc;border-radius:10.5px;"></div>
<div style="left:1641px;top:691px;width:278px;height:73px;background:#e5f0f7;"></div>
<div style="left:1641px;top:755px;width:278px;height:8px;overflow:hidden"><div style="left:213.5px;top:3px;width:50.5px;height:21px;background:#0072bc;border-radius:10px"></div><span style="left:18px;top:6px;font-size:12px;line-height:12px;color:#a4a4a4">Targeting</span></div>
<div style="left:1641px;top:763px;width:278px;height:158px;background:#fff;"></div>
<div style="left:1641px;top:763px;width:278px;height:1px;background:#ddd;"></div>
<svg style="left:1893px;top:788.5px;" width="11" height="7" viewBox="0 0 11 7"><path fill="none" stroke="#555" stroke-width="1.6" d="M1 1l4.5 4.5L10 1"/></svg>
<div style="left:1641px;top:813px;width:278px;height:2px;background:#ddd;"></div>
<svg style="left:1893px;top:838.5px;" width="11" height="7" viewBox="0 0 11 7"><path fill="none" stroke="#555" stroke-width="1.6" d="M1 1l4.5 4.5L10 1"/></svg>
<div style="left:1641px;top:863px;width:278px;height:58px;background:#fafafa;border-top:1px solid #ccc;"></div>
<div style="left:1656px;top:879px;width:40px;height:30px;background:#0072bc;border-radius:4px;"></div>
<svg style="left:1671px;top:888px;" width="10" height="12" viewBox="0 0 10 12"><path fill="none" stroke="#fff" stroke-width="2" d="M7.5 1.5L3 6l4.5 4.5"/></svg>
<div style="left:1711px;top:879px;width:140px;height:30.5px;background:#62ad4e;border-radius:4px;"></div>
<div style="left:1866px;top:879px;width:40px;height:30px;background:#c6c6c6;border-radius:4px;"></div>
<svg style="left:1881px;top:888px;" width="10" height="12" viewBox="0 0 10 12"><path fill="none" stroke="#fff" stroke-width="2" d="M2.5 1.5L7 6l-4.5 4.5"/></svg>
<div style="left:180px;top:440px;width:170px;height:500px;clip-path:path('M28 5H38A13 13 0 0 1 51 18V32A13 13 0 0 1 38 45H28A13 13 0 0 1 15 32V18A13 13 0 0 1 28 5ZM73 6H76A12 12 0 0 1 88 18V33A12 12 0 0 1 76 45H73A12 12 0 0 1 61 33V18A12 12 0 0 1 73 6ZM29 13H78A14 14 0 0 1 92 27V41A14 14 0 0 1 78 55H29A14 14 0 0 1 15 41V27A14 14 0 0 1 29 13ZM32 45H128A16 16 0 0 1 144 61V79A16 16 0 0 1 128 95H32A16 16 0 0 1 16 79V61A16 16 0 0 1 32 45ZM32 85H74A16 16 0 0 1 90 101V119A16 16 0 0 1 74 135H32A16 16 0 0 1 16 119V101A16 16 0 0 1 32 85ZM32 125H75A16 16 0 0 1 91 141V159A16 16 0 0 1 75 175H32A16 16 0 0 1 16 159V141A16 16 0 0 1 32 125ZM32 165H89A16 16 0 0 1 105 181V199A16 16 0 0 1 89 215H32A16 16 0 0 1 16 199V181A16 16 0 0 1 32 165ZM32 205H71A16 16 0 0 1 87 221V239A16 16 0 0 1 71 255H32A16 16 0 0 1 16 239V221A16 16 0 0 1 32 205ZM23 245H137A16 16 0 0 1 153 261V279A16 16 0 0 1 137 295H23A16 16 0 0 1 7 279V261A16 16 0 0 1 23 245ZM23 285H80A16 16 0 0 1 96 301V319A16 16 0 0 1 80 335H23A16 16 0 0 1 7 319V301A16 16 0 0 1 23 285ZM23 325H73A16 16 0 0 1 89 341V359A16 16 0 0 1 73 375H23A16 16 0 0 1 7 359V341A16 16 0 0 1 23 325ZM23 365H89A16 16 0 0 1 105 381V399A16 16 0 0 1 89 415H23A16 16 0 0 1 7 399V381A16 16 0 0 1 23 365ZM23 405H107A16 16 0 0 1 123 421V439A16 16 0 0 1 107 455H23A16 16 0 0 1 7 439V421A16 16 0 0 1 23 405ZM23 445H74A16 16 0 0 1 90 461V479A16 16 0 0 1 74 495H23A16 16 0 0 1 7 479V461A16 16 0 0 1 23 445ZM26 20H50A10 10 0 0 1 60 30V250A10 10 0 0 1 50 260H26A10 10 0 0 1 16 250V30A10 10 0 0 1 26 20ZM17 240H50A10 10 0 0 1 60 250V480A10 10 0 0 1 50 490H17A10 10 0 0 1 7 480V250A10 10 0 0 1 17 240ZM78 12L88 9L147 52L78 52Z')"><div style="left:-20px;top:-50px;width:210px;height:640px;background:linear-gradient(180deg,#fff 0,#fff 60px,transparent 60px),repeating-linear-gradient(180deg,#fafafa 0,#fafafa 20px,#ededed 20px,#ededed 60px,#fafafa 60px,#fafafa 80px);filter:blur(16px)"></div><div style="left:28px;top:25px;width:55px;height:13px;background:rgba(0,0,0,0.13);border-radius:6.5px;filter:blur(7px)"></div><div style="left:28px;top:65px;width:98px;height:13px;background:rgba(0,0,0,0.17);border-radius:6.5px;filter:blur(7px)"></div><div style="left:28px;top:105px;width:48px;height:13px;background:rgba(0,0,0,0.13);border-radius:6.5px;filter:blur(7px)"></div><div style="left:28px;top:145px;width:52px;height:13px;background:rgba(0,0,0,0.17);border-radius:6.5px;filter:blur(7px)"></div><div style="left:28px;top:185px;width:64px;height:13px;background:rgba(0,0,0,0.12);border-radius:6.5px;filter:blur(7px)"></div><div style="left:28px;top:225px;width:47px;height:13px;background:rgba(0,0,0,0.16);border-radius:6.5px;filter:blur(7px)"></div><div style="left:28px;top:265px;width:114px;height:13px;background:rgba(0,0,0,0.1);border-radius:6.5px;filter:blur(7px)"></div><div style="left:28px;top:305px;width:56px;height:13px;background:rgba(0,0,0,0.15);border-radius:6.5px;filter:blur(7px)"></div><div style="left:28px;top:345px;width:46px;height:13px;background:rgba(0,0,0,0.11);border-radius:6.5px;filter:blur(7px)"></div><div style="left:28px;top:385px;width:64px;height:13px;background:rgba(0,0,0,0.17);border-radius:6.5px;filter:blur(7px)"></div><div style="left:28px;top:425px;width:82px;height:13px;background:rgba(0,0,0,0.11);border-radius:6.5px;filter:blur(7px)"></div><div style="left:28px;top:465px;width:50px;height:13px;background:rgba(0,0,0,0.16);border-radius:6.5px;filter:blur(7px)"></div><div style="left:116px;top:265px;width:22px;height:13px;background:rgba(0,0,0,0.12);border-radius:6.5px;filter:blur(7px)"></div></div>
<div style="left:670px;top:440px;width:100px;height:500px;clip-path:path('M22 6H64A14 14 0 0 1 78 20V40A14 14 0 0 1 64 54H22A14 14 0 0 1 8 40V20A14 14 0 0 1 22 6ZM22 46H52A14 14 0 0 1 66 60V80A14 14 0 0 1 52 94H22A14 14 0 0 1 8 80V60A14 14 0 0 1 22 46ZM27 86H48A14 14 0 0 1 62 100V120A14 14 0 0 1 48 134H27A14 14 0 0 1 13 120V100A14 14 0 0 1 27 86ZM27 126H50A14 14 0 0 1 64 140V160A14 14 0 0 1 50 174H27A14 14 0 0 1 13 160V140A14 14 0 0 1 27 126ZM28 166H48A14 14 0 0 1 62 180V200A14 14 0 0 1 48 214H28A14 14 0 0 1 14 200V180A14 14 0 0 1 28 166ZM28 206H48A14 14 0 0 1 62 220V240A14 14 0 0 1 48 254H28A14 14 0 0 1 14 240V220A14 14 0 0 1 28 206ZM27 246H48A14 14 0 0 1 62 260V280A14 14 0 0 1 48 294H27A14 14 0 0 1 13 280V260A14 14 0 0 1 27 246ZM27 286H48A14 14 0 0 1 62 300V320A14 14 0 0 1 48 334H27A14 14 0 0 1 13 320V300A14 14 0 0 1 27 286ZM27 326H48A14 14 0 0 1 62 340V360A14 14 0 0 1 48 374H27A14 14 0 0 1 13 360V340A14 14 0 0 1 27 326ZM27 366H48A14 14 0 0 1 62 380V400A14 14 0 0 1 48 414H27A14 14 0 0 1 13 400V380A14 14 0 0 1 27 366ZM27 406H48A14 14 0 0 1 62 420V440A14 14 0 0 1 48 454H27A14 14 0 0 1 13 440V420A14 14 0 0 1 27 406ZM27 446H48A14 14 0 0 1 62 460V480A14 14 0 0 1 48 494H27A14 14 0 0 1 13 480V460A14 14 0 0 1 27 446ZM21 80H42A8 8 0 0 1 50 88V482A8 8 0 0 1 42 490H21A8 8 0 0 1 13 482V88A8 8 0 0 1 21 80Z')"><div style="left:-20px;top:-50px;width:140px;height:640px;background:linear-gradient(180deg,#fff 0,#fff 60px,transparent 60px),repeating-linear-gradient(180deg,#fafafa 0,#fafafa 20px,#ededed 20px,#ededed 60px,#fafafa 60px,#fafafa 80px);filter:blur(16px)"></div><div style="left:21px;top:25px;width:30px;height:13px;background:rgba(0,0,0,0.13);border-radius:6.5px;filter:blur(7px)"></div><div style="left:21px;top:65px;width:30px;height:13px;background:rgba(0,0,0,0.16);border-radius:6.5px;filter:blur(7px)"></div><div style="left:21px;top:105px;width:30px;height:13px;background:rgba(0,0,0,0.11);border-radius:6.5px;filter:blur(7px)"></div><div style="left:21px;top:145px;width:30px;height:13px;background:rgba(0,0,0,0.16);border-radius:6.5px;filter:blur(7px)"></div><div style="left:21px;top:185px;width:30px;height:13px;background:rgba(0,0,0,0.1);border-radius:6.5px;filter:blur(7px)"></div><div style="left:21px;top:225px;width:30px;height:13px;background:rgba(0,0,0,0.15);border-radius:6.5px;filter:blur(7px)"></div><div style="left:21px;top:265px;width:30px;height:13px;background:rgba(0,0,0,0.09);border-radius:6.5px;filter:blur(7px)"></div><div style="left:21px;top:305px;width:30px;height:13px;background:rgba(0,0,0,0.15);border-radius:6.5px;filter:blur(7px)"></div><div style="left:21px;top:345px;width:30px;height:13px;background:rgba(0,0,0,0.09);border-radius:6.5px;filter:blur(7px)"></div><div style="left:21px;top:385px;width:30px;height:13px;background:rgba(0,0,0,0.15);border-radius:6.5px;filter:blur(7px)"></div><div style="left:21px;top:425px;width:30px;height:13px;background:rgba(0,0,0,0.09);border-radius:6.5px;filter:blur(7px)"></div><div style="left:21px;top:465px;width:30px;height:13px;background:rgba(0,0,0,0.15);border-radius:6.5px;filter:blur(7px)"></div></div>
<span style="top:22px;font-size:13px;line-height:13px;color:#555;-webkit-text-stroke:0.49px;letter-spacing:0.163px;left:162px;">Advertiser</span>
<span style="top:22px;font-size:13px;line-height:13px;color:#c8c8c8;letter-spacing:-0.139px;left:284.1px;-webkit-text-stroke:0.25px;">Dashboard</span>
<span style="top:22px;font-size:13px;line-height:13px;color:#c8c8c8;letter-spacing:0.254px;left:368.1px;-webkit-text-stroke:0.25px;">Statistics</span>
<span style="top:22px;font-size:13px;line-height:13px;color:#fff;letter-spacing:-0.008px;left:443.2px;-webkit-text-stroke:0.35px;">Campaigns</span>
<span style="top:22px;font-size:13px;line-height:13px;color:#c8c8c8;letter-spacing:-0.116px;left:528.3px;-webkit-text-stroke:0.25px;">Payments</span>
<span style="top:22px;font-size:13px;line-height:13px;color:#c8c8c8;letter-spacing:0.019px;left:605.4px;-webkit-text-stroke:0.25px;">Marketplace</span>
<span style="top:72px;font-size:13px;line-height:13px;color:#fff;letter-spacing:0.053px;left:281.7px;-webkit-text-stroke:0.35px;">Campaigns List</span>
<span style="top:72px;font-size:13px;line-height:13px;color:#a9d3ee;letter-spacing:-0.138px;left:387.9px;-webkit-text-stroke:0.25px;">Landing Pages</span>
<span style="top:72px;font-size:13px;line-height:13px;color:#a9d3ee;letter-spacing:-0.106px;left:489.4px;-webkit-text-stroke:0.25px;">Conversion Tracking</span>
<span style="top:72px;font-size:13px;line-height:13px;color:#a9d3ee;letter-spacing:-0.196px;left:636.3px;-webkit-text-stroke:0.25px;">Bidder</span>
<span style="top:72px;font-size:13px;line-height:13px;color:#a9d3ee;letter-spacing:-0.064px;left:703px;-webkit-text-stroke:0.25px;">Media Library</span>
<span style="top:16px;font-size:11px;line-height:11px;color:#9097a0;-webkit-text-stroke:0.18px;letter-spacing:-0.278px;left:1586.1px;">Balance</span>
<span style="top:32px;font-size:13px;line-height:13px;color:#fff;-webkit-text-stroke:0.49px;letter-spacing:-0.175px;left:1585.5px;">-€0.07</span>
<span style="top:24px;font-size:13px;line-height:13px;color:#fff;font-weight:700;left:1648.4px;transform:scaleX(0.9064);transform-origin:0 0;">ADD FUNDS</span>
<span style="top:144px;font-size:14px;line-height:14px;color:#222;-webkit-text-stroke:0.18px;letter-spacing:-0.535px;left:233.75px;">General</span>
<span style="top:144px;font-size:14px;line-height:14px;color:#222;-webkit-text-stroke:0.18px;letter-spacing:-0.062px;left:520.5px;">Ads</span>
<span style="top:144px;font-size:14px;line-height:14px;color:#222;-webkit-text-stroke:0.18px;letter-spacing:0.113px;left:783px;">Targeting</span>
<span style="top:144px;font-size:14px;line-height:14px;color:#222;-webkit-text-stroke:0.18px;letter-spacing:0.035px;left:1067px;">Pricing &amp; Limits</span>
<span style="top:144px;font-size:13px;line-height:13px;color:#fff;font-weight:700;left:1366.4px;">5</span>
<span style="top:144px;font-size:14px;line-height:14px;color:#222;-webkit-text-stroke:0.52px;letter-spacing:-0.180px;left:1395.8px;">Zones</span>
<span style="top:206px;font-size:18px;line-height:18px;color:#222;-webkit-text-stroke:0.64px;letter-spacing:0.117px;left:30.2px;">Filters</span>
<span style="top:243px;font-size:10px;line-height:10px;color:#777;-webkit-text-stroke:0.18px;letter-spacing:-0.165px;left:30.2px;">Traffic Type</span>
<span style="top:259px;font-size:13px;line-height:13px;color:#222;-webkit-text-stroke:0.18px;letter-spacing:-0.027px;left:30px;">All</span>
<span style="top:260px;font-size:11px;line-height:11px;color:#333;-webkit-text-stroke:0.18px;letter-spacing:-0.009px;left:430.5px;">Include Partner Networks</span>
<span style="top:243px;font-size:10px;line-height:10px;color:#0072bc;-webkit-text-stroke:0.18px;letter-spacing:-0.109px;left:703px;">Target Mode</span>
<span style="top:259px;font-size:13px;line-height:13px;color:#222;-webkit-text-stroke:0.18px;letter-spacing:0.051px;left:703px;">Block</span>
<span style="top:337px;font-size:13px;line-height:13px;color:#959595;-webkit-text-stroke:0.18px;letter-spacing:-0.283px;left:47.2px;">Search Site Name, URL, Ad Zone or Zone ID</span>
<span style="top:336px;font-size:13px;line-height:13px;color:#fff;font-weight:700;left:575.6px;transform:scaleX(0.8924);transform-origin:0 0;">BULK SELECT ZONES</span>
<span style="top:335px;font-size:11px;line-height:11px;color:#757575;-webkit-text-stroke:0.18px;letter-spacing:-0.143px;left:745.6px;">Show Selected (0)</span>
<span style="top:335px;font-size:11px;line-height:11px;color:#757575;-webkit-text-stroke:0.18px;letter-spacing:-0.037px;left:866px;">Show with Custom Price (0)</span>
<span style="top:318px;font-size:10px;line-height:10px;color:#777;-webkit-text-stroke:0.18px;letter-spacing:-0.131px;left:1009.5px;">Impressions</span>
<span style="top:334px;font-size:13px;line-height:13px;color:#222;-webkit-text-stroke:0.18px;letter-spacing:-0.022px;left:1009.5px;">Global Impressions</span>
<span style="top:395px;font-size:11px;line-height:11px;color:#333;-webkit-text-stroke:0.18px;letter-spacing:-0.210px;left:35.9px;">Show</span>
<span style="top:395px;font-size:11px;line-height:11px;color:#333;-webkit-text-stroke:0.18px;left:78px;">50</span>
<span style="top:395px;font-size:11px;line-height:11px;color:#333;-webkit-text-stroke:0.18px;letter-spacing:-0.089px;left:123.5px;">entries</span>
<span style="top:431px;font-size:11px;line-height:11px;color:#666;-webkit-text-stroke:0.18px;letter-spacing:-0.077px;left:66.2px;">Status</span>
<span style="top:431px;font-size:11px;line-height:11px;color:#666;-webkit-text-stroke:0.18px;letter-spacing:-0.190px;left:206px;">Site</span>
<span style="top:431px;font-size:11px;line-height:11px;color:#666;-webkit-text-stroke:0.18px;letter-spacing:-0.286px;left:368px;">Type</span>
<span style="top:431px;font-size:11px;line-height:11px;color:#666;-webkit-text-stroke:0.18px;letter-spacing:-0.274px;left:509.4px;">Alexa Rank</span>
<span style="top:431px;font-size:11px;line-height:11px;color:#666;-webkit-text-stroke:0.18px;letter-spacing:-0.340px;left:685.9px;">Zone ID</span>
<span style="top:431px;font-size:11px;line-height:11px;color:#666;-webkit-text-stroke:0.18px;letter-spacing:-0.160px;left:847.4px;">Zone Type</span>
<span style="top:431px;font-size:11px;line-height:11px;color:#222;-webkit-text-stroke:0.43px;letter-spacing:0.090px;left:1024.3px;">Impressions</span>
<span style="top:431px;font-size:11px;line-height:11px;color:#666;-webkit-text-stroke:0.18px;letter-spacing:0.157px;left:1225.6px;">Top/Min CPM</span>
<span style="top:431px;font-size:11px;line-height:11px;color:#666;-webkit-text-stroke:0.18px;letter-spacing:-0.248px;left:1427.4px;">Your CPM</span>
<span style="top:466px;font-size:11px;line-height:11px;color:#aaa;-webkit-text-stroke:0.18px;letter-spacing:-0.059px;left:66.2px;">Targeted</span>
<span style="top:466px;font-size:11px;line-height:11px;color:#222;-webkit-text-stroke:0.18px;left:509.6px;">5602925</span>
<span style="top:466px;font-size:11px;line-height:11px;color:#222;-webkit-text-stroke:0.18px;letter-spacing:-0.127px;left:847.4px;">300x250 - NTV A</span>
<span style="top:466px;font-size:11px;line-height:11px;color:#222;-webkit-text-stroke:0.18px;letter-spacing:-0.177px;left:1024.3px;">558,359,399</span>
<span style="top:466px;font-size:11px;line-height:11px;color:#222;-webkit-text-stroke:0.18px;letter-spacing:-0.043px;left:1427.7px;">Default</span>
<span style="top:506px;font-size:11px;line-height:11px;color:#aaa;-webkit-text-stroke:0.18px;letter-spacing:-0.059px;left:66.2px;">Targeted</span>
<span style="top:506px;font-size:11px;line-height:11px;color:#222;-webkit-text-stroke:0.18px;left:509.6px;">267091</span>
<span style="top:506px;font-size:11px;line-height:11px;color:#222;-webkit-text-stroke:0.18px;letter-spacing:0.006px;left:847.4px;">300x250 - Mobile Middle</span>
<span style="top:506px;font-size:11px;line-height:11px;color:#222;-webkit-text-stroke:0.18px;letter-spacing:-0.177px;left:1024.3px;">256,843,379</span>
<span style="top:506px;font-size:11px;line-height:11px;color:#222;-webkit-text-stroke:0.18px;letter-spacing:-0.043px;left:1427.7px;">Default</span>
<span style="top:546px;font-size:11px;line-height:11px;color:#aaa;-webkit-text-stroke:0.18px;letter-spacing:-0.059px;left:66.2px;">Targeted</span>
<span style="top:546px;font-size:11px;line-height:11px;color:#222;-webkit-text-stroke:0.18px;left:509.6px;">2381</span>
<span style="top:546px;font-size:11px;line-height:11px;color:#222;-webkit-text-stroke:0.18px;letter-spacing:-0.198px;left:847.4px;">300x250 - NTV B</span>
<span style="top:546px;font-size:11px;line-height:11px;color:#222;-webkit-text-stroke:0.18px;letter-spacing:-0.177px;left:1024.3px;">230,972,699</span>
<span style="top:546px;font-size:11px;line-height:11px;color:#222;-webkit-text-stroke:0.18px;letter-spacing:-0.043px;left:1427.7px;">Default</span>
<span style="top:586px;font-size:11px;line-height:11px;color:#aaa;-webkit-text-stroke:0.18px;letter-spacing:-0.059px;left:66.2px;">Targeted</span>
<span style="top:586px;font-size:11px;line-height:11px;color:#222;-webkit-text-stroke:0.18px;left:509.6px;">717731</span>
<span style="top:586px;font-size:11px;line-height:11px;color:#222;-webkit-text-stroke:0.18px;letter-spacing:0.006px;left:847.4px;">300x250 - Mobile Middle</span>
<span style="top:586px;font-size:11px;line-height:11px;color:#222;-webkit-text-stroke:0.18px;letter-spacing:-0.185px;left:1024.3px;">87,658,762</span>
<span style="top:586px;font-size:11px;line-height:11px;color:#222;-webkit-text-stroke:0.18px;letter-spacing:-0.043px;left:1427.7px;">Default</span>
<span style="top:626px;font-size:11px;line-height:11px;color:#aaa;-webkit-text-stroke:0.18px;letter-spacing:-0.059px;left:66.2px;">Targeted</span>
<span style="top:626px;font-size:11px;line-height:11px;color:#222;-webkit-text-stroke:0.18px;left:509.6px;">13879</span>
<span style="top:626px;font-size:11px;line-height:11px;color:#222;-webkit-text-stroke:0.18px;letter-spacing:0.032px;left:847.4px;">300x250 - Mobile Bottom</span>
<span style="top:626px;font-size:11px;line-height:11px;color:#222;-webkit-text-stroke:0.18px;letter-spacing:-0.185px;left:1024.3px;">64,291,506</span>
<span style="top:626px;font-size:11px;line-height:11px;color:#222;-webkit-text-stroke:0.18px;letter-spacing:-0.043px;left:1427.7px;">Default</span>
<span style="top:666px;font-size:11px;line-height:11px;color:#aaa;-webkit-text-stroke:0.18px;letter-spacing:-0.059px;left:66.2px;">Targeted</span>
<span style="top:666px;font-size:11px;line-height:11px;color:#222;-webkit-text-stroke:0.18px;left:509.6px;">4360</span>
<span style="top:666px;font-size:11px;line-height:11px;color:#222;-webkit-text-stroke:0.18px;letter-spacing:0.032px;left:847.4px;">300x250 - Mobile Bottom</span>
<span style="top:666px;font-size:11px;line-height:11px;color:#222;-webkit-text-stroke:0.18px;letter-spacing:-0.185px;left:1024.3px;">55,086,393</span>
<span style="top:666px;font-size:11px;line-height:11px;color:#222;-webkit-text-stroke:0.18px;letter-spacing:-0.043px;left:1427.7px;">Default</span>
<span style="top:706px;font-size:11px;line-height:11px;color:#aaa;-webkit-text-stroke:0.18px;letter-spacing:-0.059px;left:66.2px;">Targeted</span>
<span style="top:706px;font-size:11px;line-height:11px;color:#222;-webkit-text-stroke:0.18px;left:509.6px;">78421</span>
<span style="top:706px;font-size:11px;line-height:11px;color:#222;-webkit-text-stroke:0.18px;letter-spacing:-0.036px;left:847.4px;">300x250</span>
<span style="top:706px;font-size:11px;line-height:11px;color:#222;-webkit-text-stroke:0.18px;letter-spacing:-0.185px;left:1024.3px;">53,894,106</span>
<span style="top:706px;font-size:11px;line-height:11px;color:#222;-webkit-text-stroke:0.18px;letter-spacing:-0.043px;left:1427.7px;">Default</span>
<span style="top:746px;font-size:11px;line-height:11px;color:#aaa;-webkit-text-stroke:0.18px;letter-spacing:-0.059px;left:66.2px;">Targeted</span>
<span style="top:746px;font-size:11px;line-height:11px;color:#222;-webkit-text-stroke:0.18px;left:509.6px;">1539</span>
<span style="top:746px;font-size:11px;line-height:11px;color:#222;-webkit-text-stroke:0.18px;letter-spacing:-0.052px;left:847.4px;">300x250 - Footer</span>
<span style="top:746px;font-size:11px;line-height:11px;color:#222;-webkit-text-stroke:0.18px;letter-spacing:-0.185px;left:1024.3px;">40,015,718</span>
<span style="top:746px;font-size:11px;line-height:11px;color:#222;-webkit-text-stroke:0.18px;letter-spacing:-0.043px;left:1427.7px;">Default</span>
<span style="top:786px;font-size:11px;line-height:11px;color:#aaa;-webkit-text-stroke:0.18px;letter-spacing:-0.059px;left:66.2px;">Targeted</span>
<span style="top:786px;font-size:11px;line-height:11px;color:#222;-webkit-text-stroke:0.18px;left:509.6px;">20654</span>
<span style="top:786px;font-size:11px;line-height:11px;color:#222;-webkit-text-stroke:0.18px;letter-spacing:-0.036px;left:847.4px;">300x250</span>
<span style="top:786px;font-size:11px;line-height:11px;color:#222;-webkit-text-stroke:0.18px;letter-spacing:-0.185px;left:1024.3px;">39,558,941</span>
<span style="top:786px;font-size:11px;line-height:11px;color:#222;-webkit-text-stroke:0.18px;letter-spacing:-0.043px;left:1427.7px;">Default</span>
<span style="top:826px;font-size:11px;line-height:11px;color:#aaa;-webkit-text-stroke:0.18px;letter-spacing:-0.059px;left:66.2px;">Targeted</span>
<span style="top:826px;font-size:11px;line-height:11px;color:#222;-webkit-text-stroke:0.18px;left:509.6px;">88</span>
<span style="top:826px;font-size:11px;line-height:11px;color:#222;-webkit-text-stroke:0.18px;letter-spacing:-0.127px;left:847.4px;">300x250 - NTV A</span>
<span style="top:826px;font-size:11px;line-height:11px;color:#222;-webkit-text-stroke:0.18px;letter-spacing:-0.185px;left:1024.3px;">39,408,371</span>
<span style="top:826px;font-size:11px;line-height:11px;color:#222;-webkit-text-stroke:0.18px;letter-spacing:-0.043px;left:1427.7px;">Default</span>
<span style="top:866px;font-size:11px;line-height:11px;color:#aaa;-webkit-text-stroke:0.18px;letter-spacing:-0.059px;left:66.2px;">Targeted</span>
<span style="top:866px;font-size:11px;line-height:11px;color:#222;-webkit-text-stroke:0.18px;left:509.6px;">3918373</span>
<span style="top:866px;font-size:11px;line-height:11px;color:#222;-webkit-text-stroke:0.18px;letter-spacing:-0.127px;left:847.4px;">300x250 - NTV A</span>
<span style="top:866px;font-size:11px;line-height:11px;color:#222;-webkit-text-stroke:0.18px;letter-spacing:-0.185px;left:1024.3px;">37,306,083</span>
<span style="top:866px;font-size:11px;line-height:11px;color:#222;-webkit-text-stroke:0.18px;letter-spacing:-0.043px;left:1427.7px;">Default</span>
<span style="top:906px;font-size:11px;line-height:11px;color:#aaa;-webkit-text-stroke:0.18px;letter-spacing:-0.059px;left:66.2px;">Targeted</span>
<span style="top:906px;font-size:11px;line-height:11px;color:#222;-webkit-text-stroke:0.18px;left:509.6px;">11003</span>
<span style="top:906px;font-size:11px;line-height:11px;color:#222;-webkit-text-stroke:0.18px;letter-spacing:0.006px;left:847.4px;">300x250 - Mobile Middle</span>
<span style="top:906px;font-size:11px;line-height:11px;color:#222;-webkit-text-stroke:0.18px;letter-spacing:-0.185px;left:1024.3px;">35,733,979</span>
<span style="top:906px;font-size:11px;line-height:11px;color:#222;-webkit-text-stroke:0.18px;letter-spacing:-0.043px;left:1427.7px;">Default</span>
<span style="top:115px;font-size:13px;line-height:13px;color:#505050;-webkit-text-stroke:0.49px;letter-spacing:-0.053px;left:1661.6px;">Campaign Summary</span>
<span style="top:158px;font-size:15px;line-height:15px;color:#444;-webkit-text-stroke:0.55px;letter-spacing:-0.178px;left:1659.1px;">General Details</span>
<span style="top:188px;font-size:12px;line-height:12px;color:#a4a4a4;-webkit-text-stroke:0.18px;letter-spacing:-0.305px;left:1659px;">Name</span>
<span style="top:187px;font-size:11px;line-height:11px;color:#222;-webkit-text-stroke:0.43px;letter-spacing:0.189px;right:13.11px;">test</span>
<span style="top:212px;font-size:12px;line-height:12px;color:#a4a4a4;-webkit-text-stroke:0.18px;letter-spacing:-0.090px;left:1659px;">Group</span>
<span style="top:211px;font-size:11px;line-height:11px;color:#222;-webkit-text-stroke:0.43px;letter-spacing:-0.272px;right:13.57px;">No Group</span>
<span style="top:236px;font-size:12px;line-height:12px;color:#a4a4a4;-webkit-text-stroke:0.18px;letter-spacing:0.097px;left:1659px;">Format</span>
<span style="top:235px;font-size:11px;line-height:11px;color:#222;-webkit-text-stroke:0.43px;letter-spacing:-0.070px;right:13.37px;">Banner - 300x250</span>
<span style="top:260px;font-size:12px;line-height:12px;color:#a4a4a4;-webkit-text-stroke:0.18px;letter-spacing:-0.081px;left:1659px;">Categories</span>
<span style="top:277px;font-size:11px;line-height:11px;color:#222;-webkit-text-stroke:0.43px;letter-spacing:0.027px;right:13.27px;">Adult: ALL</span>
<span style="top:309px;font-size:12px;line-height:12px;color:#a4a4a4;-webkit-text-stroke:0.18px;letter-spacing:-0.170px;left:1659px;">Campaign Type</span>
<span style="top:311px;font-size:11px;line-height:11px;color:#fff;font-weight:700;left:1849.7px;transform:scaleX(0.9227);transform-origin:0 0;">Standard</span>
<span style="top:356px;font-size:15px;line-height:15px;color:#444;-webkit-text-stroke:0.55px;letter-spacing:0.099px;left:1659.1px;">Ad Variations</span>
<span style="top:386px;font-size:12px;line-height:12px;color:#a4a4a4;-webkit-text-stroke:0.18px;letter-spacing:0.113px;left:1659px;">Variations</span>
<span style="top:385px;font-size:11px;line-height:11px;color:#222;-webkit-text-stroke:0.43px;right:13.30px;">1</span>
<span style="top:410px;font-size:12px;line-height:12px;color:#a4a4a4;-webkit-text-stroke:0.18px;letter-spacing:0.143px;left:1659px;">Distribution Algorithm</span>
<span style="top:409px;font-size:11px;line-height:11px;color:#222;-webkit-text-stroke:0.43px;letter-spacing:-0.085px;right:13.38px;">Automatic on CTR</span>
<span style="top:457px;font-size:15px;line-height:15px;color:#444;-webkit-text-stroke:0.55px;letter-spacing:-0.013px;left:1659.1px;">Targeting &amp; Advanced</span>
<span style="top:487px;font-size:12px;line-height:12px;color:#a4a4a4;-webkit-text-stroke:0.18px;letter-spacing:-0.174px;left:1659px;">Country or Region</span>
<span style="top:486px;font-size:11px;line-height:11px;color:#222;-webkit-text-stroke:0.43px;letter-spacing:0.064px;right:13.24px;">All Targeted</span>
<span style="top:534px;font-size:15px;line-height:15px;color:#444;-webkit-text-stroke:0.55px;letter-spacing:0.107px;left:1659.1px;">Pricing</span>
<span style="top:564px;font-size:12px;line-height:12px;color:#a4a4a4;-webkit-text-stroke:0.18px;letter-spacing:-0.025px;left:1659px;">Pricing Model</span>
<span style="top:566px;font-size:11px;line-height:11px;color:#fff;font-weight:700;left:1837.7px;transform:scaleX(0.9491);transform-origin:0 0;">Smart CPM</span>
<span style="top:588px;font-size:12px;line-height:12px;color:#a4a4a4;-webkit-text-stroke:0.18px;letter-spacing:-0.211px;left:1659px;">Price</span>
<span style="top:587px;font-size:11px;line-height:11px;color:#222;-webkit-text-stroke:0.43px;letter-spacing:-0.007px;right:13.31px;">€0.1</span>
<span style="top:612px;font-size:12px;line-height:12px;color:#a4a4a4;-webkit-text-stroke:0.18px;letter-spacing:-0.167px;left:1659px;">Budget Type</span>
<span style="top:611px;font-size:11px;line-height:11px;color:#aaa;-webkit-text-stroke:0.43px;letter-spacing:-0.266px;right:13.57px;">None</span>
<span style="top:636px;font-size:12px;line-height:12px;color:#a4a4a4;-webkit-text-stroke:0.18px;letter-spacing:-0.171px;left:1659px;">Frequency Capping</span>
<span style="top:635px;font-size:11px;line-height:11px;color:#aaa;-webkit-text-stroke:0.43px;letter-spacing:-0.059px;right:13.36px;">Disabled</span>
<span style="top:660px;font-size:12px;line-height:12px;color:#a4a4a4;-webkit-text-stroke:0.18px;letter-spacing:-0.138px;left:1659px;">Bidder</span>
<span style="top:662px;font-size:11px;line-height:11px;color:#fff;font-weight:700;left:1851.5px;transform:scaleX(0.9202);transform-origin:0 0;">Disabled</span>
<span style="top:707px;font-size:15px;line-height:15px;color:#444;-webkit-text-stroke:0.55px;letter-spacing:-0.191px;left:1659.1px;">Sites &amp; Zones</span>
<span style="top:737px;font-size:12px;line-height:12px;color:#a4a4a4;-webkit-text-stroke:0.18px;letter-spacing:-0.119px;left:1659px;">Traffic Type</span>
<span style="top:736px;font-size:11px;line-height:11px;color:#222;-webkit-text-stroke:0.43px;letter-spacing:0.233px;right:13.07px;">All</span>
<span style="top:781px;font-size:15px;line-height:15px;color:#444;-webkit-text-stroke:0.55px;letter-spacing:0.034px;left:1659.2px;">Status</span>
<span style="top:831px;font-size:15px;line-height:15px;color:#444;-webkit-text-stroke:0.55px;letter-spacing:0.134px;left:1659.2px;">Traffic Estimates</span>
<span style="top:888px;font-size:13px;line-height:13px;color:#fff;font-weight:700;left:1757.8px;transform:scaleX(0.8955);transform-origin:0 0;">CREATE</span>

</div></body></html>
